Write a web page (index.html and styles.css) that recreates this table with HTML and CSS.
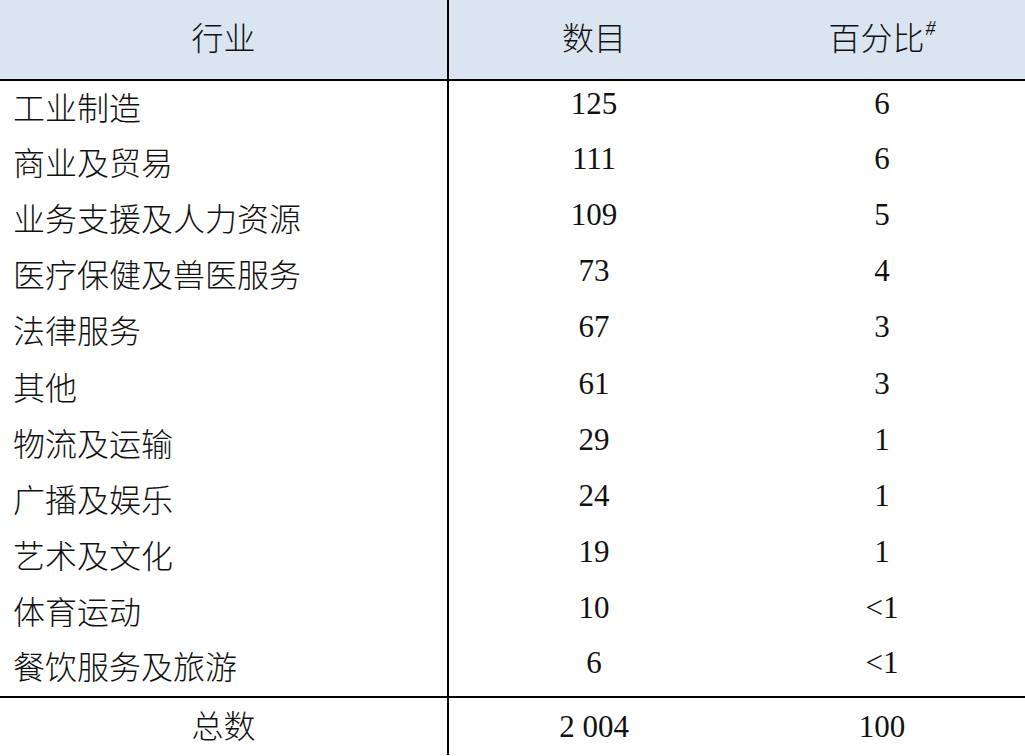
FILE: index.html
```html
<!DOCTYPE html>
<html lang="zh-CN">
<head>
<meta charset="utf-8">
<title>行业</title>
<link rel="stylesheet" href="styles.css">
</head>
<body>
<table class="stats">
  <colgroup>
    <col class="c-name">
    <col class="c-num">
    <col class="c-pct">
  </colgroup>
  <thead>
    <tr class="head">
      <th class="name-h">行业</th>
      <th>数目</th>
      <th>百分比<sup class="mark">#</sup></th>
    </tr>
  </thead>
  <tbody>
    <tr><td class="name">工业制造</td><td class="num">125</td><td class="num">6</td></tr>
    <tr><td class="name">商业及贸易</td><td class="num">111</td><td class="num">6</td></tr>
    <tr><td class="name">业务支援及人力资源</td><td class="num">109</td><td class="num">5</td></tr>
    <tr><td class="name">医疗保健及兽医服务</td><td class="num">73</td><td class="num">4</td></tr>
    <tr><td class="name">法律服务</td><td class="num">67</td><td class="num">3</td></tr>
    <tr><td class="name">其他</td><td class="num">61</td><td class="num">3</td></tr>
    <tr><td class="name">物流及运输</td><td class="num">29</td><td class="num">1</td></tr>
    <tr><td class="name">广播及娱乐</td><td class="num">24</td><td class="num">1</td></tr>
    <tr><td class="name">艺术及文化</td><td class="num">19</td><td class="num">1</td></tr>
    <tr><td class="name">体育运动</td><td class="num">10</td><td class="num">&lt;1</td></tr>
    <tr><td class="name">餐饮服务及旅游</td><td class="num">6</td><td class="num">&lt;1</td></tr>
  </tbody>
  <tfoot>
    <tr class="total">
      <td class="name-h">总数</td>
      <td class="sum">2 004</td>
      <td class="sum">100</td>
    </tr>
  </tfoot>
</table>
</body>
</html>
```

FILE: styles.css
```css
html, body {
  margin: 0;
  padding: 0;
  background: #ffffff;
}

body {
  font-family: "Liberation Serif", "Noto Sans CJK SC", serif;
  color: #111111;
}

.stats {
  width: 1025px;
  border-collapse: collapse;
  table-layout: fixed;
  font-size: 31px;
  font-weight: 300;
}

.c-name { width: 448px; }
.c-num { width: 291px; }
.c-pct { width: 286px; }

.stats th,
.stats td {
  padding: 0;
  text-align: center;
  vertical-align: middle;
  font-weight: 300;
  line-height: 1;
}

.stats th:first-child,
.stats td:first-child {
  border-right: 2px solid #000000;
}

.head {
  height: 80px;
  background: #dbe5f1;
  border-bottom: 2px solid #000000;
}

.head th {
  font-size: 32px;
  padding-bottom: 2px;
}

.mark {
  font-family: "Liberation Serif", serif;
  font-size: 20px;
  font-style: italic;
  font-weight: normal;
  vertical-align: top;
  position: relative;
  top: -5px;
  margin-left: 1px;
}

.stats tbody tr {
  height: 56.1px;
}

.stats td.num {
  padding-bottom: 11px;
}

.stats td.name {
  text-align: left;
  padding-left: 13px;
  font-size: 32px;
}

.stats td.name-h {
  font-size: 32px;
}

.total {
  height: 58px;
  border-top: 2px solid #000000;
}
```
